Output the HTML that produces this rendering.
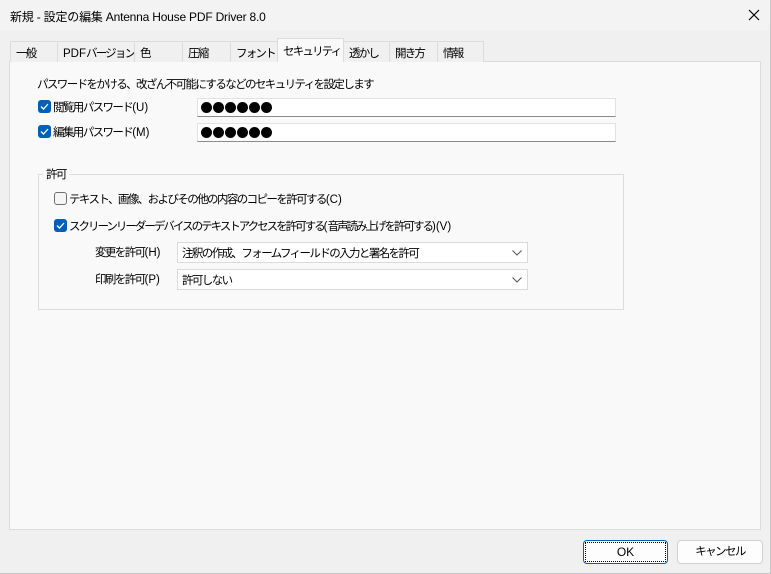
<!DOCTYPE html>
<html><head><meta charset="utf-8"><style>
*{box-sizing:border-box;margin:0;padding:0}
body{width:771px;height:574px;background:#f0f0f0;font-family:"Liberation Sans","Noto Sans CJK JP",sans-serif;font-size:12px;color:#000;position:relative;overflow:hidden}
.a{position:absolute;white-space:nowrap}
.j{font-size:11.5px;letter-spacing:-1.6px}
.l{letter-spacing:0}
#win{position:absolute;left:0;top:0;width:771px;height:574px;border-right:1px solid #c8c8c8;border-bottom:1px solid #c8c8c8}
#title{position:absolute;left:0;top:0;width:770px;height:31px;background:#f3f3f3}
.tab{position:absolute;top:41px;height:21px;border:1px solid #dcdcdc;border-bottom:none;background:#f0f0f0;padding:3px 0 0 5px;font-size:11.5px;letter-spacing:-1.8px;white-space:nowrap;overflow:hidden}
.tab.sel{top:38px;height:24px;background:#f9f9f9;z-index:2;padding-top:4px}
#panel{position:absolute;left:9px;top:61px;width:752px;height:469px;background:#f9f9f9;border:1px solid #dcdcdc}
.cb{position:absolute;width:13px;height:13px;border-radius:3px;background:#005fb8}
.cb svg{position:absolute;left:2px;top:2px}
.cbe{position:absolute;width:13px;height:13px;border-radius:3px;border:1px solid #707070;background:#f5f5f5}
.pw{position:absolute;left:197px;width:419px;height:19px;background:#fff;border:1px solid #e2e2e2;border-bottom:1px solid #8a8a8a;padding:3px 0 0 3px;font-size:0}
.pw i{display:inline-block;width:11px;height:11px;border-radius:50%;background:#000;margin-right:1px}
.combo{position:absolute;left:177px;width:351px;height:21px;background:#fff;border:1px solid #dadada;padding:2px 0 0 4px}
.combo svg{position:absolute;right:5px;top:7px}
.btn{position:absolute;top:540px;height:24px;border-radius:4px;text-align:center;line-height:22px;background:#fdfdfd;border:1px solid #d0d0d0}
</style></head><body>
<div id="win"></div>
<div id="title"></div>
<div class="a" style="left:10px;top:8px;font-size:12px;letter-spacing:-0.2px">新規 - 設定の編集 Antenna House PDF Driver 8.0</div>
<svg class="a" style="left:748px;top:9px" width="12" height="12"><path d="M1 1L11 11M11 1L1 11" stroke="#000" stroke-width="1.2"/></svg>

<div id="panel"></div>
<div class="tab" style="left:10px;width:48px">一般</div>
<div class="tab" style="left:57px;width:78px"><span class="l">PDF</span>バージョン</div>
<div class="tab" style="left:134px;width:49px">色</div>
<div class="tab" style="left:182px;width:49px">圧縮</div>
<div class="tab" style="left:230px;width:48px">フォント</div>
<div class="tab sel" style="left:277px;width:67px">セキュリティ</div>
<div class="tab" style="left:343px;width:47px">透かし</div>
<div class="tab" style="left:389px;width:49px">開き方</div>
<div class="tab" style="left:437px;width:47px">情報</div>

<div class="a j" style="left:37px;top:76px">パスワードをかける、改ざん不可能にするなどのセキュリティを設定します</div>
<div class="cb" style="left:38px;top:100px"><svg width="9" height="9"><path d="M1 4.5L3.5 7L8 2" stroke="#fff" stroke-width="1.3" fill="none"/></svg></div>
<div class="a j" style="left:53px;top:99px">閲覧用パスワード<span class="l">(U)</span></div>
<div class="pw" style="top:98px"><i></i><i></i><i></i><i></i><i></i><i></i></div>
<div class="cb" style="left:38px;top:125px"><svg width="9" height="9"><path d="M1 4.5L3.5 7L8 2" stroke="#fff" stroke-width="1.3" fill="none"/></svg></div>
<div class="a j" style="left:53px;top:124px">編集用パスワード<span class="l">(M)</span></div>
<div class="pw" style="top:123px"><i></i><i></i><i></i><i></i><i></i><i></i></div>

<div class="a" style="left:38px;top:174px;width:586px;height:136px;border:1px solid #dcdcdc"></div>
<div class="a j" style="left:43px;top:166px;background:#f9f9f9;padding:0 3px">許可</div>
<div class="cbe" style="left:54px;top:192px"></div>
<div class="a j" style="left:69px;top:191px">テキスト、画像、およびその他の内容のコピーを許可する<span class="l">(C)</span></div>
<div class="cb" style="left:54px;top:219px"><svg width="9" height="9"><path d="M1 4.5L3.5 7L8 2" stroke="#fff" stroke-width="1.3" fill="none"/></svg></div>
<div class="a j" style="left:69px;top:218px;letter-spacing:-2px">スクリーンリーダーデバイスのテキストアクセスを許可する<span class="l">(</span>音声読み上げを許可する<span class="l">)(V)</span></div>
<div class="a j" style="left:95px;top:244px">変更を許可<span class="l">(H)</span></div>
<div class="combo j" style="top:242px">注釈の作成、フォームフィールドの入力と署名を許可<svg width="10" height="6"><path d="M0.5 0.5L5 5L9.5 0.5" stroke="#555" fill="none"/></svg></div>
<div class="a j" style="left:95px;top:271px">印刷を許可<span class="l">(P)</span></div>
<div class="combo j" style="top:269px">許可しない<svg width="10" height="6"><path d="M0.5 0.5L5 5L9.5 0.5" stroke="#555" fill="none"/></svg></div>

<div class="btn" style="left:583px;width:85px;border:1px solid #005fb8;padding:1px"><div style="border:1px dotted #000;height:20px;line-height:18px">OK</div></div>
<div class="btn j" style="left:677px;width:86px">キャンセル</div>
</body></html>
